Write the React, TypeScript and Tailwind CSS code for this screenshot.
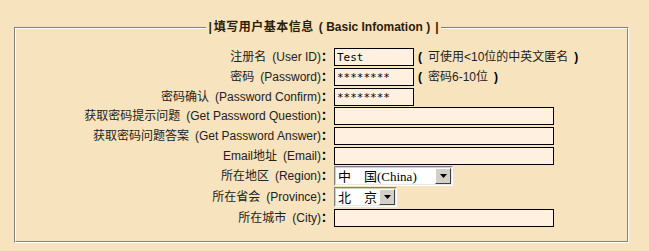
import React from "react";

const BG = "bg-[#f7e3bd]";

function TextInput({ w, value }: { w: string; value?: string }) {
  return (
    <div
      className={`${w} h-[18px] border border-black bg-[#fff0df] pl-[2px] flex items-center font-['DejaVu_Sans_Mono',monospace] text-[11px] text-black leading-none`}
    >
      {value}
    </div>
  );
}

function Select({ w, text }: { w: string; text: React.ReactNode }) {
  return (
    <div
      className={`${w} h-[20px] border border-t-[#808080] border-l-[#808080] border-r-white border-b-white`}
    >
      <div className="h-full flex bg-white border border-t-[#d4d0c8] border-l-[#d4d0c8] border-r-[#ece9e1] border-b-[#ece9e1]">
        <div className="flex-1 flex items-center pl-[2px] font-['Liberation_Serif','Noto_Sans_CJK_SC',serif] text-[13px] text-black leading-none whitespace-pre">
          {text}
        </div>
        <div className="w-[16px] h-[16px] bg-[#d4d0c8] border border-t-white border-l-white border-r-[#404040] border-b-[#404040] flex items-center justify-center">
          <svg width="7" height="4" viewBox="0 0 7 4">
            <path d="M0 0H7L3.5 4Z" fill="#000" />
          </svg>
        </div>
      </div>
    </div>
  );
}

function Row({
  mt,
  label,
  en,
  children,
}: {
  mt: string;
  label: string;
  en: string;
  children: React.ReactNode;
}) {
  return (
    <div className={`${mt} flex items-center`}>
      <div className="w-[317px] text-right text-[12px] leading-none text-[#222] whitespace-pre">
        {label}
        {"\u2002"}
        {en}
        <span className="font-bold text-black">：</span>
      </div>
      <div className="ml-[1px] flex items-center">{children}</div>
    </div>
  );
}

function Hint({ children }: { children: React.ReactNode }) {
  return (
    <span className="ml-[4px] text-[12px] leading-none text-[#222] whitespace-pre">
      <b className="text-black">(</b>
      {"\u2002"}
      {children}
      {"\u2002"}
      <b className="text-black">)</b>
    </span>
  );
}

export default function App() {
  return (
    <div
      className={`w-[649px] h-[251px] ${BG} pt-[27px] pl-[14px] font-['Liberation_Sans','Noto_Sans_CJK_SC',sans-serif]`}
    >
      <div className="relative w-[615px] h-[216px] border border-t-[#808080] border-l-[#808080] border-r-white border-b-white">
        <div className="absolute -top-[9px] left-0 right-0 flex justify-center pl-[4px]">
          <span
            className={`${BG} px-[2px] h-[16px] flex items-center text-[12px] font-bold text-[#2b1d05] leading-none whitespace-pre`}
          >
            <span>|</span>
            <span className="ml-[2px] tracking-[0.5px]">填写用户基本信息</span>
            <span className="ml-[5px]">( Basic Infomation )</span>
            <span className="ml-[5px]">|</span>
          </span>
        </div>
        <div className="h-full border border-t-white border-l-white border-r-[#808080] border-b-[#808080] pt-[19px]">
          <Row mt="mt-0" label="注册名" en="(User ID)">
            <TextInput w="w-[80px]" value="Test" />
            <Hint>可使用&lt;10位的中英文匿名</Hint>
          </Row>
          <Row mt="mt-[2px]" label="密码" en="(Password)">
            <TextInput w="w-[80px]" value="********" />
            <Hint>密码6-10位</Hint>
          </Row>
          <Row mt="mt-[2px]" label="密码确认" en="(Password Confirm)">
            <TextInput w="w-[80px]" value="********" />
          </Row>
          <Row mt="mt-[1px]" label="获取密码提示问题" en="(Get Password Question)">
            <TextInput w="w-[220px]" />
          </Row>
          <Row mt="mt-[2px]" label="获取密码问题答案" en="(Get Password Answer)">
            <TextInput w="w-[220px]" />
          </Row>
          <Row mt="mt-[2px]" label="Email地址" en="(Email)">
            <TextInput w="w-[220px]" />
          </Row>
          <Row mt="mt-[1px]" label="所在地区" en="(Region)">
            <Select w="w-[119px]" text={"中\u3000国(China)"} />
          </Row>
          <Row mt="mt-[1px]" label="所在省会" en="(Province)">
            <Select w="w-[63px]" text={"北\u3000京"} />
          </Row>
          <Row mt="mt-[2px]" label="所在城市" en="(City)">
            <TextInput w="w-[220px]" />
          </Row>
        </div>
      </div>
    </div>
  );
}
